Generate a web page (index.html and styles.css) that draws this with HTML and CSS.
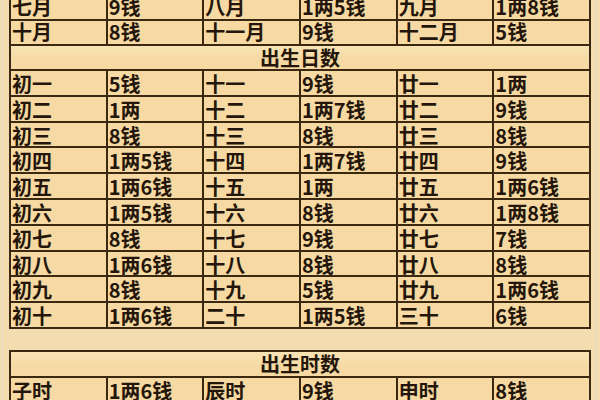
FILE: index.html
```html
<!DOCTYPE html>
<html lang="zh">
<head>
<meta charset="utf-8">
<link rel="stylesheet" href="styles.css">
</head>
<body>
<div class="page">
  <div class="grid top">
    <div class="c">七月</div><div class="c">9钱</div><div class="c">八月</div><div class="c">1两5钱</div><div class="c">九月</div><div class="c">1两8钱</div>
    <div class="c">十月</div><div class="c">8钱</div><div class="c">十一月</div><div class="c">9钱</div><div class="c">十二月</div><div class="c">5钱</div>
    <div class="c head">出生日数</div>
    <div class="c d">初一</div><div class="c d">5钱</div><div class="c d">十一</div><div class="c d">9钱</div><div class="c d">廿一</div><div class="c d">1两</div>
    <div class="c d">初二</div><div class="c d">1两</div><div class="c d">十二</div><div class="c d">1两7钱</div><div class="c d">廿二</div><div class="c d">9钱</div>
    <div class="c d">初三</div><div class="c d">8钱</div><div class="c d">十三</div><div class="c d">8钱</div><div class="c d">廿三</div><div class="c d">8钱</div>
    <div class="c d">初四</div><div class="c d">1两5钱</div><div class="c d">十四</div><div class="c d">1两7钱</div><div class="c d">廿四</div><div class="c d">9钱</div>
    <div class="c d">初五</div><div class="c d">1两6钱</div><div class="c d">十五</div><div class="c d">1两</div><div class="c d">廿五</div><div class="c d">1两6钱</div>
    <div class="c d">初六</div><div class="c d">1两5钱</div><div class="c d">十六</div><div class="c d">8钱</div><div class="c d">廿六</div><div class="c d">1两8钱</div>
    <div class="c d">初七</div><div class="c d">8钱</div><div class="c d">十七</div><div class="c d">9钱</div><div class="c d">廿七</div><div class="c d">7钱</div>
    <div class="c d">初八</div><div class="c d">1两6钱</div><div class="c d">十八</div><div class="c d">8钱</div><div class="c d">廿八</div><div class="c d">8钱</div>
    <div class="c d">初九</div><div class="c d">8钱</div><div class="c d">十九</div><div class="c d">5钱</div><div class="c d">廿九</div><div class="c d">1两6钱</div>
    <div class="c d">初十</div><div class="c d">1两6钱</div><div class="c d">二十</div><div class="c d">1两5钱</div><div class="c d">三十</div><div class="c d">6钱</div>
  </div>
  <div class="grid bottom">
    <div class="c head">出生时数</div>
    <div class="c d">子时</div><div class="c d">1两6钱</div><div class="c d">辰时</div><div class="c d">9钱</div><div class="c d">申时</div><div class="c d">8钱</div>
  </div>
</div>
</body>
</html>
```
FILE: styles.css
```css
html, body {
  margin: 0;
  padding: 0;
  background: #f3ddb0;
  overflow: hidden;
}
.page {
  width: 594px;
  height: 400px;
  margin-left: 2px;
  border-left: 1px solid #e2d9c6;
  border-right: 1px solid #e2d9c6;
  padding: 0 5px 0 6px;
  box-sizing: border-box;
  overflow: hidden;
}
.grid {
  display: grid;
  grid-template-columns: repeat(6, 1fr);
  gap: 2px;
  padding: 2px;
  background: #3a2910;
  width: 582px;
  box-sizing: border-box;
}
.top {
  margin-top: -6px;
  grid-template-rows: 23px 23px 23px repeat(10, 23.8px);
}
.bottom {
  margin-top: 21px;
  grid-template-rows: 24px 23.8px;
}
.c {
  background: #f6d9a3;
  font-family: "Noto Sans CJK SC", sans-serif;
  font-size: 20px;
  font-weight: 600;
  color: #24160a;
  line-height: 22px;
  padding-left: 1px;
  white-space: nowrap;
  overflow: hidden;
  box-sizing: border-box;
}
.d {
  line-height: 22px;
  padding-top: 2px;
}
.head {
  grid-column: 1 / -1;
  text-align: center;
  padding-left: 0;
  padding-top: 1px;
  background: linear-gradient(#f9e4b6, #f6d9a3 60%);
}
```
